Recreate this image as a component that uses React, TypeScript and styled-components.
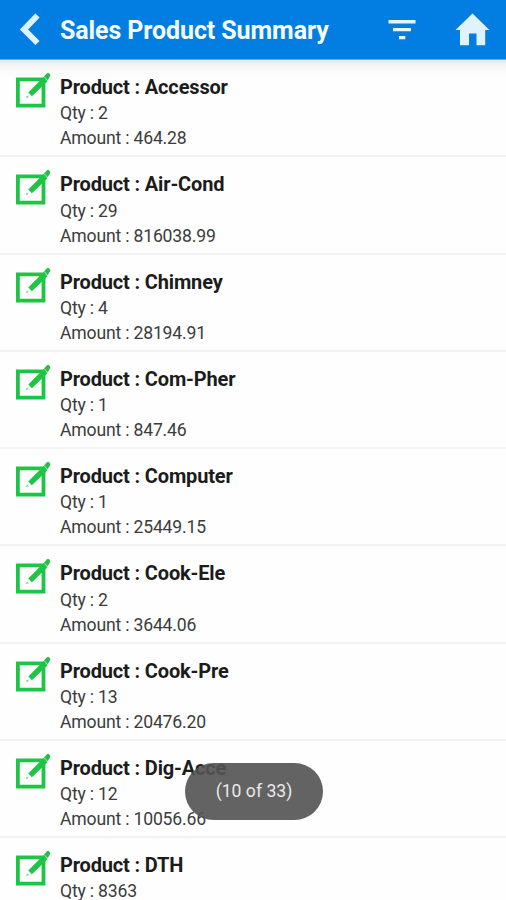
import React from "react";
import styled, { createGlobalStyle } from "styled-components";

const GlobalStyle = createGlobalStyle`
  * { box-sizing: border-box; }
  html, body { margin: 0; padding: 0; background: #fefefe; }
  body { font-family: Roboto, "Liberation Sans", sans-serif; overflow: hidden; }
  svg { display: block; flex: none; }
`;

const Screen = styled.div`
  position: relative;
  display: flex;
  flex-direction: column;
  width: 506px;
  height: 900px;
  overflow: hidden;
  background: #fefefe;
`;

const AppBar = styled.header`
  display: flex;
  flex: none;
  align-items: center;
  height: 60px;
  padding: 0 16px 0 19px;
  background: #027ee2;
  border-bottom: 1px solid #62aee8;
`;

const Title = styled.h1`
  flex: 1;
  margin: 2px 0 0 20px;
  color: #f5fcff;
  font-size: 25px;
  font-weight: 700;
  line-height: 30px;
  letter-spacing: -0.1px;
  white-space: nowrap;
`;

const Actions = styled.div`
  display: flex;
  align-items: center;
  gap: 39px;
`;

const List = styled.main`
  flex: 1;
  min-height: 0;
  overflow: hidden;
  background: linear-gradient(#e5e6e7 0, #f3f3f3 5px, #fafafa 11px, #fefefe 20px);
`;

const Row = styled.article`
  display: flex;
  height: 97.25px;
  padding: 11px 0 0 15px;
  border-bottom: 2px solid #f3f3f3;
`;

const Details = styled.div`
  margin: 3px 0 0 9px;
  white-space: nowrap;
`;

const ProductName = styled.h2`
  margin: 0;
  color: #1c1c1c;
  font-size: 20px;
  font-weight: 700;
  line-height: 27.4px;
  letter-spacing: -0.16px;
`;

const Detail = styled.p`
  margin: 0;
  color: #3c3c3c;
  font-size: 17.6px;
  line-height: 25px;
  letter-spacing: -0.18px;
`;

const Toast = styled.div`
  position: absolute;
  left: 185px;
  top: 763px;
  display: flex;
  align-items: center;
  justify-content: center;
  width: 138px;
  height: 57px;
  padding-bottom: 1px;
  border-radius: 29px;
  background: rgba(83, 83, 83, 0.91);
  color: #e9e9e9;
  font-size: 17.6px;
`;

const BackIcon = () => (
  <svg width="21" height="34" viewBox="0 0 21 34" aria-label="Back">
    <path d="M18.5 2.5 5 16.5l13.5 13.5" fill="none" stroke="#e0f3fc" strokeWidth="6" />
  </svg>
);

const FilterIcon = () => (
  <svg width="28" height="20" viewBox="0 0 28 20" aria-label="Filter">
    <path d="M0.5 0h27v3.5h-27zM5 8h18v3.3H5zM11 16h6.3v3.3H11z" fill="#e5f5fd" />
  </svg>
);

const HomeIcon = () => (
  <svg width="35" height="34" viewBox="0 0 35 34" aria-label="Home">
    <path d="M17.5 .5 34.5 17h-4.3v15.3H21.5V20.5h-7.5v11.8H5V17H.5z" fill="#e0f2fb" />
  </svg>
);

const EditIcon = () => (
  <svg width="36" height="38" viewBox="0 0 36 38" aria-label="Edit">
    <path d="M2.9 8.4h25.6v26.3H2.9z" fill="none" stroke="#1dc544" strokeWidth="3.8" />
    <path d="m13.3 21.5 15.3-15.6 3.9 4.4-15.6 14.9z" fill="#1dc544" />
    <path d="m29 5.4 3-3.2q1-1 2 0l1 1.2q.8 1-.1 2L32.5 9.5z" fill="#24bd46" />
    <path d="m29.5 5.5 3 3.4" stroke="#8fd9a0" strokeWidth=".6" />
    <path d="m10.8 26.7 1.2-2.3 2 1.8z" fill="#77cb88" />
  </svg>
);

const products = [
  { name: "Accessor", qty: "2", amount: "464.28" },
  { name: "Air-Cond", qty: "29", amount: "816038.99" },
  { name: "Chimney", qty: "4", amount: "28194.91" },
  { name: "Com-Pher", qty: "1", amount: "847.46" },
  { name: "Computer", qty: "1", amount: "25449.15" },
  { name: "Cook-Ele", qty: "2", amount: "3644.06" },
  { name: "Cook-Pre", qty: "13", amount: "20476.20" },
  { name: "Dig-Acce", qty: "12", amount: "10056.66" },
  { name: "DTH", qty: "8363" },
];

export default function App() {
  return (
    <Screen>
      <GlobalStyle />
      <AppBar>
        <BackIcon />
        <Title>Sales Product Summary</Title>
        <Actions>
          <FilterIcon />
          <HomeIcon />
        </Actions>
      </AppBar>
      <List>
        {products.map((product) => (
          <Row key={product.name}>
            <EditIcon />
            <Details>
              <ProductName>Product : {product.name}</ProductName>
              <Detail>Qty : {product.qty}</Detail>
              {product.amount && <Detail>Amount : {product.amount}</Detail>}
            </Details>
          </Row>
        ))}
      </List>
      <Toast>(10 of 33)</Toast>
    </Screen>
  );
}
